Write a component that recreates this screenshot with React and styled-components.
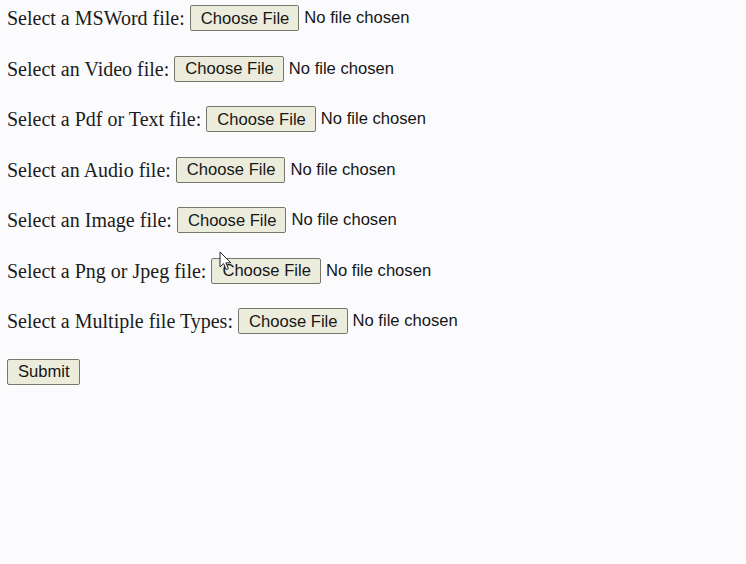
import React, { useState } from 'react';
import styled, { createGlobalStyle } from 'styled-components';

const GlobalStyle = createGlobalStyle`
  html, body {
    margin: 0;
    background: #fbfbfe;
  }
  body {
    padding: 5px 7px;
    font-family: "Liberation Serif", "Times New Roman", serif;
    font-size: 20px;
    color: #1b1b1b;
  }
`;

const fields = [
  { label: 'Select a MSWord file:', accept: '.doc,.docx' },
  { label: 'Select an Video file:', accept: 'video/*' },
  { label: 'Select a Pdf or Text file:', accept: '.pdf,.txt' },
  { label: 'Select an Audio file:', accept: 'audio/*' },
  { label: 'Select an Image file:', accept: 'image/*' },
  { label: 'Select a Png or Jpeg file:', accept: '.png,.jpg,.jpeg' },
  { label: 'Select a Multiple file Types:', accept: '*', multiple: true },
];

const App = () => {
  const [files, setFiles] = useState({});

  const handleChange = (idx) => (e) => {
    const list = e.target.files;
    setFiles((prev) => ({ ...prev, [idx]: list && list.length ? list : null }));
  };

  const statusText = (idx) => {
    const list = files[idx];
    if (!list) return 'No file chosen';
    return list.length > 1 ? `${list.length} files` : list[0].name;
  };

  return (
    <>
      <GlobalStyle />
      <Form onSubmit={(e) => e.preventDefault()}>
        {fields.map((f, i) => (
          <Row key={f.label}>
            <Label htmlFor={`file-${i}`}>{f.label}</Label>
            <Picker>
              <HiddenInput
                id={`file-${i}`}
                type="file"
                accept={f.accept}
                multiple={f.multiple}
                onChange={handleChange(i)}
              />
              <ChooseButton type="button" onClick={() => document.getElementById(`file-${i}`).click()}>
                Choose File
              </ChooseButton>
              <Status>{statusText(i)}</Status>
            </Picker>
          </Row>
        ))}
        <Row>
          <ChooseButton type="submit">Submit</ChooseButton>
        </Row>
      </Form>
      <Cursor width="14" height="20" viewBox="0 0 14 20">
        <path
          d="M1 1 L1 16 L4.6 12.6 L7.2 18.6 L9.4 17.6 L6.9 11.8 L11.8 11.8 Z"
          fill="#fff"
          stroke="#222"
          strokeWidth="1"
          strokeLinejoin="round"
        />
      </Cursor>
    </>
  );
};

const Form = styled.form`
  display: flex;
  flex-direction: column;
  gap: 24.5px;
`;

const Row = styled.div`
  display: flex;
  align-items: center;
  height: 26px;
  white-space: nowrap;
`;

const Label = styled.label`
  margin-right: 5px;
  line-height: 1;
`;

const Picker = styled.span`
  display: inline-flex;
  align-items: center;
`;

const HiddenInput = styled.input`
  display: none;
`;

const ChooseButton = styled.button`
  height: 26px;
  padding: 1px 9px 0 10px;
  margin-right: 5px;
  background: #ececdd;
  border: 1px solid #77776c;
  border-radius: 2px;
  font-family: "Liberation Sans", Arial, sans-serif;
  font-size: 16.6px;
  color: #161616;
  cursor: default;
`;

const Status = styled.span`
  font-family: "Liberation Sans", Arial, sans-serif;
  font-size: 16.6px;
  color: #161616;
`;

const Cursor = styled.svg`
  position: absolute;
  left: 219px;
  top: 251px;
  pointer-events: none;
`;

export default App;
